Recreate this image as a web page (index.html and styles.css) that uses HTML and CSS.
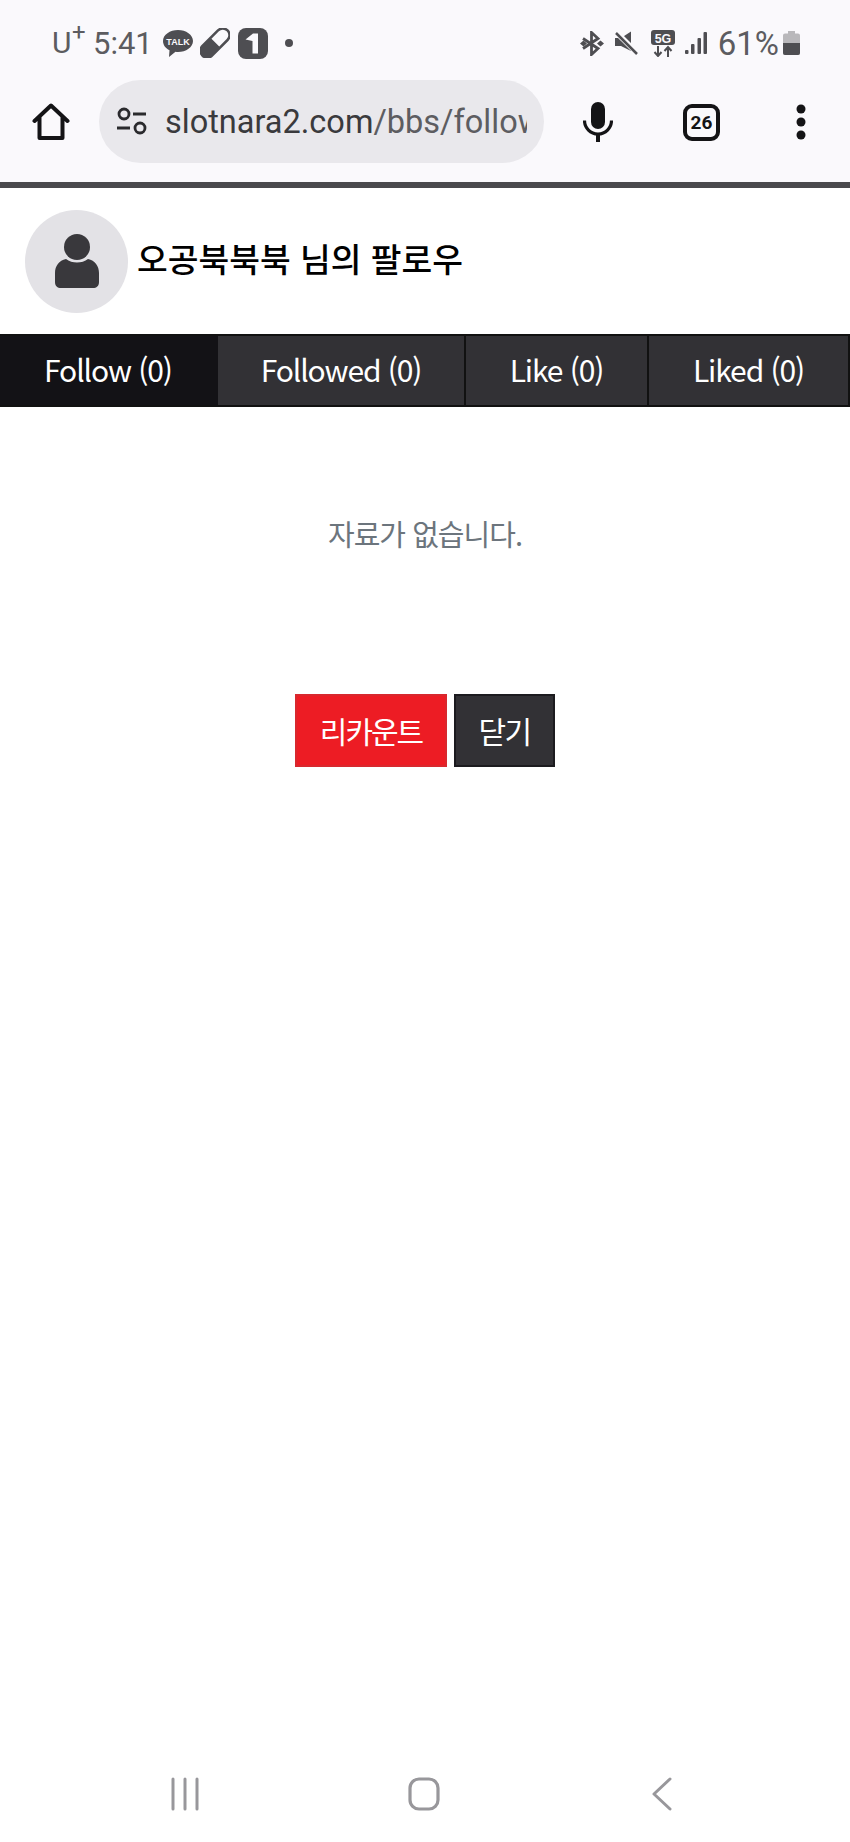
FILE: index.html
```html
<!DOCTYPE html>
<html lang="ko">
<head>
<meta charset="utf-8">
<title>팔로우</title>
<link rel="stylesheet" href="styles.css">
</head>
<body>
<div class="screen">
  <div class="chrome">
    <div class="status">
      <div class="status-left">
        <span class="carrier">U<sup class="plus">+</sup></span>
        <span class="clock">5:41</span>
        <svg class="ic-talk" viewBox="0 0 30 28"><path class="fill-g" d="M15 0C7 0 0 4.700 0 11c0 4 2.600 7.300 6.500 9.200L6 27l6.500-5.200c.8.100 1.700.200 2.500.200 8 0 15-4.900 15-11S23 0 15 0z"/><text x="15" y="14.500" class="talk-text">TALK</text></svg>
        <svg class="ic-pill" viewBox="0 0 30 30"><g transform="rotate(-45 15 15)"><rect x="-4" y="7" width="38" height="16" rx="8" class="fill-g"/><path d="M15.500 9.500h10.500a5.500 5.500 0 0 1 0 11H15.500z" fill="#faf9fc"/></g></svg>
        <svg class="ic-one" viewBox="0 0 30 31"><rect width="30" height="31" rx="8" class="fill-g"/><path d="M7.500 11.500l7.500-6h5v20h-5.500V13z" fill="#faf9fc"/></svg>
        <span class="dot"></span>
      </div>
      <div class="status-right">
        <svg class="ic-bt" viewBox="0 0 24 25"><path d="M3 7.500l15 10-6.500 6V1.500l6.500 6-15 10" fill="none" stroke="#4e4e52" stroke-width="2.800"/><path d="M0 12.500l3.500-3 3.500 3-3.500 3zM17 12.500l3.500-3 3.500 3-3.500 3z" class="fill-g"/></svg>
        <svg class="ic-mute" viewBox="0 0 24 24"><path d="M0 7h6l10-6.500V20L6 15H0z" class="fill-g"/><path d="M1 1l22 22" stroke="#faf9fc" stroke-width="5.500"/><path d="M1 2l21 21" stroke="#4e4e52" stroke-width="2.500"/></svg>
        <svg class="ic-5g" viewBox="0 0 24 27"><rect width="24" height="15" rx="3" class="fill-g"/><text x="12" y="12.500" class="fiveg">5G</text><path d="M7 16v10M3.500 22L7 26l3.500-4M17 27V17M13.500 21L17 17l3.500 4" fill="none" stroke="#4e4e52" stroke-width="2"/></svg>
        <svg class="ic-sig" viewBox="0 0 22 23"><g class="fill-g"><rect x="0" y="18" width="3.500" height="4" rx="1"/><rect x="6" y="12" width="3.500" height="10" rx="1"/><rect x="12.500" y="6" width="3.500" height="16" rx="1"/><rect x="18.500" y="0" width="3.500" height="22" rx="1"/></g></svg>
        <span class="battery-text">61%</span>
        <svg class="ic-batt" viewBox="0 0 17 24"><path d="M5 0h7v2.500h3a2 2 0 0 1 2 2V22a2 2 0 0 1-2 2H2a2 2 0 0 1-2-2V4.500a2 2 0 0 1 2-2h3z" fill="#b9b8bb"/><path d="M0 12h17v10a2 2 0 0 1-2 2H2a2 2 0 0 1-2-2z" class="fill-g"/></svg>
      </div>
    </div>
    <div class="toolbar">
      <svg class="ic-home" viewBox="0 0 38 38"><path d="M2.500 18L19 2.500 35.500 18M7.500 14v21h23V14" fill="none" stroke="#141416" stroke-width="4" stroke-linejoin="round" stroke-linecap="round"/></svg>
      <div class="url-pill">
        <svg class="ic-tune" viewBox="0 0 32 28"><circle cx="8" cy="7" r="5" fill="none" stroke="#2a2a2d" stroke-width="2.800"/><path d="M17 7h13M1 21h13" stroke="#2a2a2d" stroke-width="2.800"/><circle cx="24" cy="21" r="5" fill="none" stroke="#2a2a2d" stroke-width="2.800"/></svg>
        <div class="url-text"><span class="url-host">slotnara2.com</span><span class="url-path">/bbs/follow</span></div>
      </div>
      <svg class="ic-mic" viewBox="0 0 30 40"><rect x="8" y="0" width="14" height="27" rx="7" fill="#141416"/><path d="M1.500 18.500a13.500 13.500 0 0 0 27 0" fill="none" stroke="#141416" stroke-width="3.200"/><rect x="13" y="31" width="4" height="9" fill="#141416"/></svg>
      <div class="tab-count">26</div>
      <svg class="ic-more" viewBox="0 0 10 36"><circle cx="5" cy="5" r="4.500" fill="#141416"/><circle cx="5" cy="18" r="4.500" fill="#141416"/><circle cx="5" cy="31" r="4.500" fill="#141416"/></svg>
    </div>
  </div>
  <main class="page">
    <header class="profile">
      <div class="avatar">
        <svg class="ic-user" viewBox="0 0 46 56"><circle cx="23" cy="14" r="13" fill="#39383c"/><path d="M12 26c3 2.500 7 3.500 11 3.500s8-1 11-3.500c7 1.500 11 7 11 14v9c0 4-2.500 6-6 6H7c-3.500 0-6-2-6-6v-9c0-7 4-12.500 11-14z" fill="#39383c"/></svg>
      </div>
      <h1 class="title">오공북북북 님의 팔로우</h1>
    </header>
    <nav class="tabs">
      <a class="tab tab-active">Follow (0)</a>
      <a class="tab">Followed (0)</a>
      <a class="tab">Like (0)</a>
      <a class="tab">Liked (0)</a>
    </nav>
    <p class="empty">자료가 없습니다.</p>
    <div class="actions">
      <a class="btn btn-red">리카운트</a>
      <a class="btn btn-dark">닫기</a>
    </div>
  </main>
  <footer class="navbar">
    <svg class="ic-recent" viewBox="0 0 30 34"><path d="M3 2v30M15 2v30M27 2v30" stroke="#98979b" stroke-width="3" stroke-linecap="round"/></svg>
    <svg class="ic-round" viewBox="0 0 32 34"><rect x="2" y="2" width="28" height="30" rx="9" fill="none" stroke="#98979b" stroke-width="3.200"/></svg>
    <svg class="ic-back" viewBox="0 0 20 34"><path d="M18 2L2 17l16 15" fill="none" stroke="#98979b" stroke-width="3" stroke-linecap="round" stroke-linejoin="round"/></svg>
  </footer>
</div>
</body>
</html>
```
FILE: styles.css
```css
* { box-sizing: border-box; }
html, body { margin: 0; padding: 0; background: #fff; }
body { font-family: "Noto Sans CJK KR", "Noto Sans", sans-serif; }
.screen { width: 850px; height: 1842px; display: flex; flex-direction: column; overflow: hidden; }
.fill-g { fill: #4e4e52; }

.chrome { height: 188px; background: #faf9fc; border-bottom: 6px solid #4a494d; flex: none; }
.status { height: 78px; display: flex; justify-content: space-between; align-items: center; padding: 8px 50px 0 52px; }
.status-left, .status-right { display: flex; align-items: center; }
.carrier { font: 400 30px/1 Roboto, sans-serif; color: #5c5c60; position: relative; width: 33px; }
.plus { position: absolute; font-size: 24px; top: -8px; left: 20px; line-height: 1; }
.clock { font: 400 31px/1 Roboto, sans-serif; color: #5c5c60; margin-left: 8px; width: 58px; }
.ic-talk { width: 30px; height: 28px; margin-left: 12px; margin-top: 1px; }
.talk-text { font: 700 9px "Liberation Sans", sans-serif; fill: #faf9fc; text-anchor: middle; }
.ic-pill { width: 30px; height: 30px; margin-left: 7px; }
.ic-one { width: 30px; height: 31px; margin-left: 8px; }
.dot { width: 8px; height: 8px; border-radius: 50%; background: #4e4e52; margin-left: 17px; }
.ic-bt { width: 24px; height: 25px; }
.ic-mute { width: 24px; height: 24px; margin-left: 11px; }
.ic-5g { width: 24px; height: 27px; margin-left: 12px; }
.fiveg { font: 700 12.500px "Liberation Sans", sans-serif; fill: #faf9fc; text-anchor: middle; }
.ic-sig { width: 22px; height: 23px; margin-left: 10px; }
.battery-text { font: 400 33px/1 Roboto, sans-serif; color: #5c5c60; margin-left: 11px; }
.ic-batt { width: 17px; height: 24px; margin-left: 4px; }

.toolbar { height: 86px; display: flex; align-items: center; padding: 0 0 0 32px; }
.ic-home { width: 38px; height: 38px; margin-top: 2px; flex: none; }
.url-pill { width: 445px; height: 83px; margin-left: 29px; border-radius: 42px; background: #e9e8ec; display: flex; align-items: center; padding: 0 17px 0 17px; flex: none; }
.ic-tune { width: 32px; height: 28px; flex: none; }
.url-text { font: 32.500px/1.300 Roboto, sans-serif; margin-left: 17px; padding-top: 3px; white-space: nowrap; overflow: hidden; color: #5d5d61; min-width: 0; flex: 1; }
.url-host { color: #3a3a3d; }
.ic-mic { width: 30px; height: 40px; margin: 2px 0 0 39px; flex: none; }
.tab-count { width: 37px; height: 37px; margin: 2px 0 0 70px; border: 4px solid #141416; border-radius: 9px; font: 700 19px/29px Roboto, sans-serif; color: #141416; text-align: center; flex: none; }
.ic-more { width: 10px; height: 36px; margin: 2px 0 0 76px; flex: none; }

.page { flex: 1; display: flex; flex-direction: column; }
.profile { height: 146px; display: flex; align-items: center; padding: 0 25px; }
.avatar { width: 103px; height: 103px; border-radius: 50%; background: #e3e2e6; display: flex; align-items: center; justify-content: center; flex: none; }
.ic-user { width: 46px; height: 56px; }
.title { margin: 0 0 0 9px; padding-bottom: 6px; font-size: 33.400px; font-weight: 500; color: #000; line-height: 1.300; }

.tabs { display: grid; grid-template-columns: 218px 248px 183px 201px; height: 73px; border-top: 2px solid #111; border-bottom: 2px solid #111; }
.tab { display: flex; align-items: center; justify-content: center; padding-bottom: 4px; background: #323135; color: #fff; font-size: 30px; border-right: 2px solid #111; letter-spacing: -1.100px; }
.tab-active { background: #131216; border-right-color: #131216; }

.empty { margin: 106px 0 0; text-align: center; font-size: 29px; line-height: 40px; color: #6c757d; letter-spacing: -1px; }
.actions { display: flex; justify-content: center; gap: 7px; margin-top: 141px; }
.btn { height: 73px; display: flex; align-items: center; justify-content: center; padding-bottom: 2px; color: #fff; font-size: 30px; letter-spacing: -2px; border: 2px solid; }
.btn-red { width: 152px; background: #ed1c24; border-color: #d8282e; }
.btn-dark { width: 101px; background: #323135; border-color: #1c1b1f; letter-spacing: -1.500px; }

.navbar { height: 118px; flex: none; display: flex; align-items: center; padding: 22px 0 0 170px; }
.ic-recent { width: 30px; height: 34px; flex: none; }
.ic-round { width: 32px; height: 34px; margin-left: 208px; flex: none; }
.ic-back { width: 20px; height: 34px; margin-left: 212px; flex: none; }
```
